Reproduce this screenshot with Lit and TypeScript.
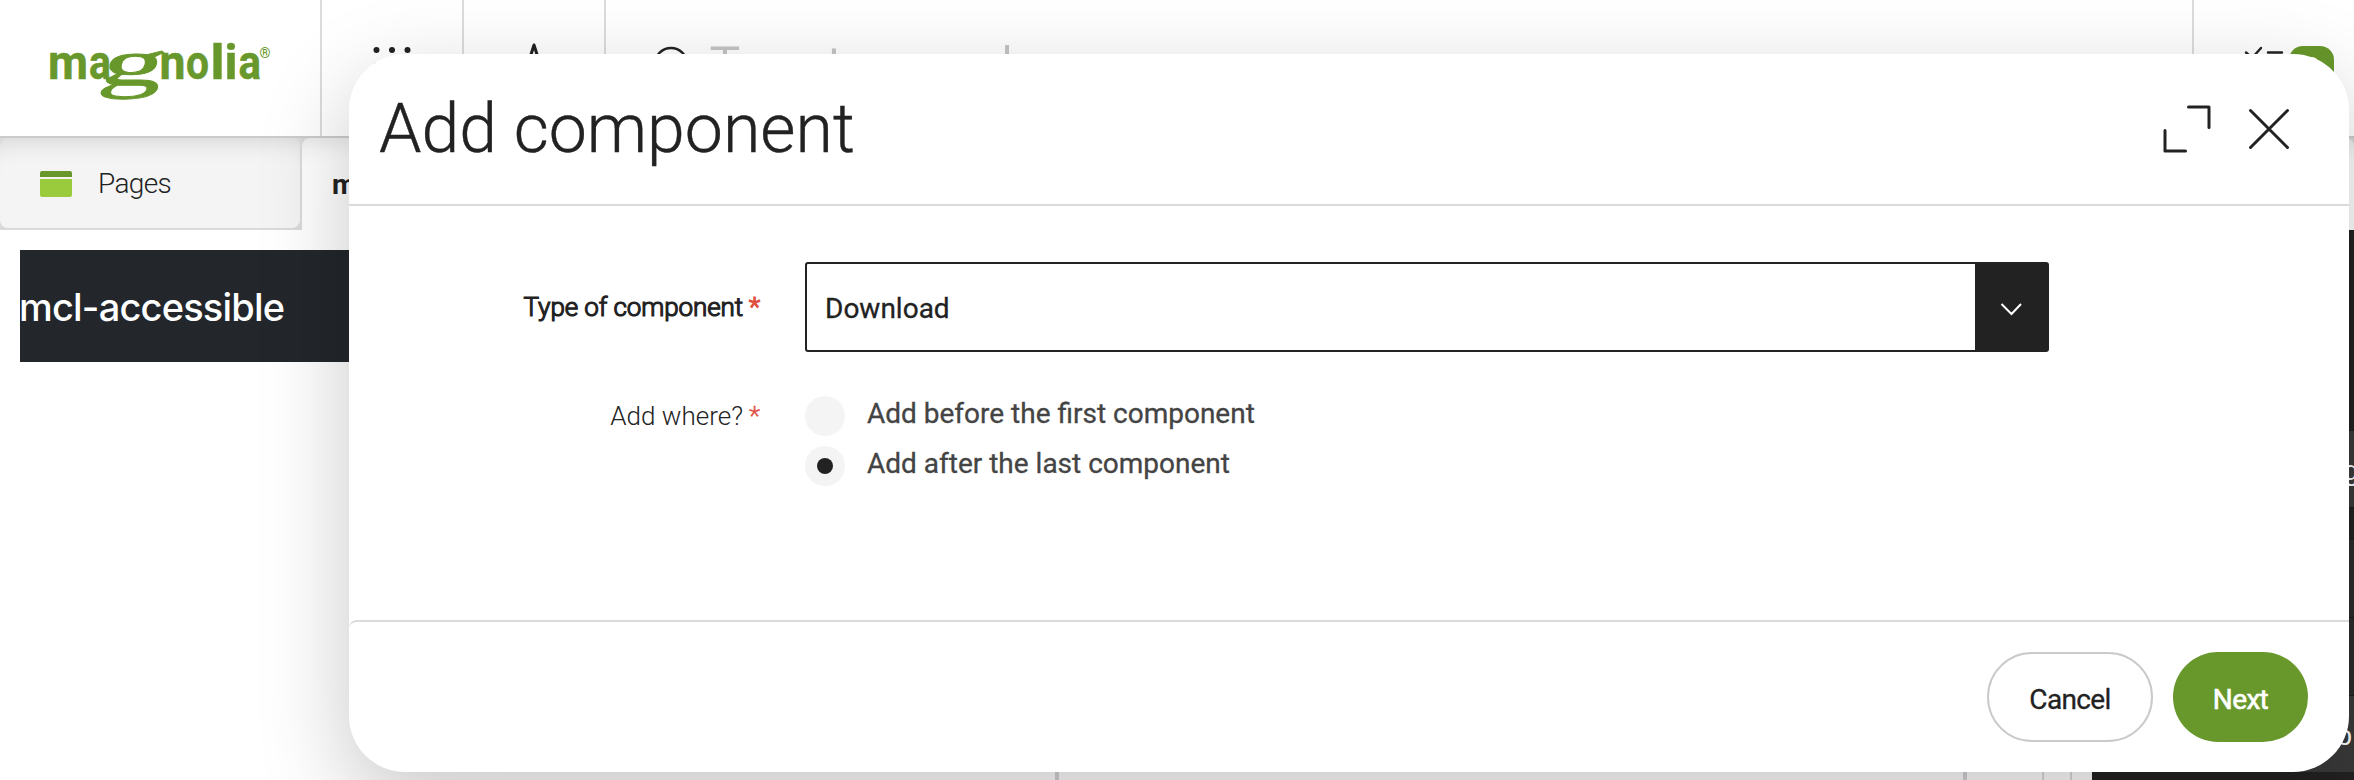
import { LitElement, html, css, svg } from "lit";
import { customElement, state } from "lit/decorators.js";

const logoLetters: Array<[string, number, number]> = [
  ["m", 48, 40],
  ["a", 89, 22],
  ["n", 159.5, 26],
  ["o", 186, 23],
  ["l", 210.5, 14],
  ["i", 224.5, 13],
  ["a", 238.5, 22.5],
];

@customElement("brand-logo")
export class BrandLogo extends LitElement {
  static styles = css`
    :host { display: block; }
    svg { display: block; fill: #68982b; font-family: Roboto, sans-serif; }
    .word { font-size: 48.5px; font-weight: 700; stroke: #68982b; stroke-width: 0.5px; }
    .g { font-family: "Liberation Serif", serif; font-size: 68px; font-weight: 400; stroke: #68982b; stroke-width: 1px; }
    .reg { font-size: 14px; font-weight: 600; }
  `;
  render() {
    return html`<svg width="320" height="136" viewBox="0 0 320 136">
      ${logoLetters.map(
        ([ch, x, w]) =>
          svg`<text class="word" x=${x} y="79" textLength=${w} lengthAdjust="spacingAndGlyphs">${ch}</text>`
      )}
      <text class="g" transform="translate(98 84.5) skewX(-14) scale(1.83 0.97)">g</text>
      <text class="reg" x="259.5" y="57.5">®</text>
    </svg>`;
  }
}

@customElement("top-bar")
export class TopBar extends LitElement {
  static styles = css`
    :host { display: flex; height: 136px; border-bottom: 2px solid #cbcbcb; background: #fff; }
    .cell { border-left: 2px solid #dcdcdc; box-sizing: border-box; }
    .small { width: 142px; }
    .search { flex: 1; display: flex; }
    .user { width: 162px; display: flex; }
    svg { display: block; fill: none; stroke: #222; stroke-width: 2.4; stroke-linecap: round; stroke-linejoin: round; }
    .dots { fill: #222; stroke: none; }
    .hint { margin-left: 4px; padding-top: 37px; font: 300 50px/59px Roboto, sans-serif; letter-spacing: -0.15px; color: #c4c4c4; white-space: nowrap; -webkit-text-stroke: 1px #c4c4c4; }
    .badge { width: 45px; height: 45px; margin: 46px 0 0 2px; border-radius: 14px; background: #68982b; color: #fff; font: 400 30px/44px Roboto, sans-serif; text-align: center; }
  `;
  render() {
    const dots = [0, 1, 2].flatMap((r) => [0, 1, 2].map((c) => [54.5 + c * 15.5, 50 + r * 15.5]));
    return html`
      <brand-logo></brand-logo>
      <div class="cell small">
        <svg class="dots" width="140" height="136">${dots.map(([x, y]) => svg`<circle cx=${x} cy=${y} r="3"/>`)}</svg>
      </div>
      <div class="cell small">
        <svg width="140" height="136"><path stroke-width="3" d="M70 45L76 64L95 64L80 75L86 93L70 82L54 93L60 75L45 64L64 64Z"/></svg>
      </div>
      <div class="cell search">
        <svg width="100" height="136"><circle cx="65" cy="64" r="16"/><path d="M77 76L90 90"/></svg>
        <span class="hint">Type to search...</span>
      </div>
      <div class="cell user">
        <svg width="93" height="136"><path d="M52 52.5L58 58L67 48M74 52.5H88M52 67L58 72L67 62M74 67H88"/></svg>
        <span class="badge">2</span>
      </div>
    `;
  }
}

@customElement("tab-bar")
export class TabBar extends LitElement {
  static styles = css`
    :host { display: flex; height: 92px; background: #fff; font: 300 28px/89px Roboto, sans-serif; color: #222; }
    .wrap { height: 92px; background: #dadada; box-sizing: border-box; }
    .idle { width: 302px; padding: 0 2px 2px 0; }
    .open { flex: 1; background: linear-gradient(#d4d4d4 0 8px, #fff 8px); }
    .tab { height: 100%; box-sizing: border-box; border-radius: 8px; background: #f4f4f4; display: flex; align-items: center; box-shadow: inset 0 24px 26px -22px rgba(0, 0, 0, 0.14); }
    .open .tab { background: #fff; border-radius: 8px 8px 0 0; padding-left: 30px; font-weight: 700; }
    .idle .tab { padding-left: 40px; letter-spacing: -0.65px; }
    svg { display: block; margin: 2px 26px 0 0; }
  `;
  render() {
    return html`
      <div class="wrap idle"><div class="tab">
        <svg width="32" height="26"><path fill="#68982b" d="M0 6V2Q0 0 2 0H30Q32 0 32 2V6Z"/><path fill="#9acb3d" d="M0 8H32V24Q32 26 30 26H2Q0 26 0 24Z"/></svg>
        <span>Pages</span>
      </div></div>
      <div class="wrap open"><div class="tab"><span>mcl-accessible</span></div></div>
    `;
  }
}

@customElement("work-area")
export class WorkArea extends LitElement {
  static styles = css`
    :host { display: flex; height: 550px; }
    .stage { flex: none; width: 2092px; display: flex; flex-direction: column; box-sizing: border-box; padding-top: 20px; }
    .banner { margin-left: 20px; height: 112px; background: #23272c; color: #fff; font: 450 38px/114px Inter, sans-serif; letter-spacing: -0.8px; text-indent: -1px; }
    .columns { flex: 1; display: grid; grid-template-columns: 1055px 908px 79px 28px 1fr; }
    .columns div + div { border-left: 2px solid #dcdcdc; }
    .columns .wide + .wide, .columns .wide + .mid { border-left: 4px solid #d3d3d8; }
    .panel { flex: 1; min-width: 0; overflow: hidden; background: #222; color: #fff; font: 400 27px/1 "Liberation Sans", sans-serif; display: flex; flex-direction: column; }
    .row { box-sizing: border-box; padding-left: 252px; border-top: 1px solid #1d1d1d; }
    .first { height: 200px; }
    .lit { height: 77px; background: #3a3a3a; line-height: 80px; }
    .gap { height: 32px; }
    .soft { height: 78px; background: #2c2c2c; }
    .last { height: 77px; background: #3a3a3a; line-height: 80px; }
    .edge { padding-left: 245px; }
  `;
  render() {
    return html`
      <div class="stage">
        <div class="banner">mcl-accessible</div>
        <div class="columns"><div class="wide"></div><div class="wide"></div><div class="mid"></div><div></div><div></div></div>
      </div>
      <div class="panel">
        <div class="row first"></div>
        <div class="row lit">g</div>
        <div class="row gap"></div>
        <div class="row soft"></div>
        <div class="row soft"></div>
        <div class="row last edge">o</div>
      </div>
    `;
  }
}

@customElement("add-dialog")
export class AddDialog extends LitElement {
  static styles = css`
    :host { display: flex; flex-direction: column; box-sizing: border-box; width: 2000px; height: 718px; border-radius: 56px; background: #fff; overflow: hidden; color: #222; font-family: Roboto, sans-serif; box-shadow: 0 30px 90px rgba(0, 0, 0, 0.22); }
    header { height: 152px; box-sizing: border-box; border-bottom: 2px solid #dadada; display: flex; align-items: center; padding: 0 59px 0 30px; }
    h1 { margin: 0; flex: 1; font-size: 68px; font-weight: 300; line-height: 80px; -webkit-text-stroke: 0.4px #222; }
    header svg { display: block; fill: none; stroke: #222; stroke-width: 3; stroke-linecap: round; stroke-linejoin: round; }
    .close { margin-left: 37px; }
    main { flex: 1; padding-top: 56px; }
    .field { display: grid; grid-template-columns: 412px 1244px; column-gap: 44px; }
    .label { justify-self: end; font-size: 26px; font-weight: 300; white-space: nowrap; display: flex; gap: 6px; padding-right: 1px; height: 40px; line-height: 40px; }
    .label i { font-style: normal; color: #e04f3f; -webkit-text-stroke: 0.4px currentColor; }
    .first .label { height: 90px; line-height: 90px; -webkit-text-stroke: 1.2px currentColor; letter-spacing: -0.1px; }
    .first .label i { -webkit-text-stroke: 1.2px currentColor; }
    .second { margin-top: 44px; }
    .select { height: 90px; box-sizing: border-box; border: 2px solid #222; border-radius: 3px; display: flex; font-size: 28px; line-height: 89px; -webkit-text-stroke: 0.3px currentColor; }
    .value { flex: 1; padding-left: 18px; }
    .arrow { width: 72px; background: #222; }
    .arrow svg { display: block; fill: none; stroke: #fff; stroke-width: 2; }
    .option { display: flex; gap: 22px; height: 50px; color: #444; font-size: 28px; line-height: 35px; cursor: pointer; -webkit-text-stroke: 0.3px currentColor; }
    .radio { width: 40px; height: 40px; border-radius: 50%; background: #f4f4f4; display: grid; place-items: center; }
    .on::after { content: ""; width: 16px; height: 16px; border-radius: 50%; background: #222; }
    footer { height: 152px; box-sizing: border-box; border-top: 2px solid #dadada; border-radius: 8px 0 0 0; padding: 30px 41px 0 0; display: flex; justify-content: flex-end; gap: 20px; }
    button { height: 90px; box-sizing: border-box; border-radius: 45px; font: 400 28px/32px Roboto, sans-serif; letter-spacing: -0.65px; padding: 6px 0 0; -webkit-text-stroke: 0.3px currentColor; }
    .cancel { width: 166px; border: 2px solid #cacaca; background: #fff; color: #222; }
    .next { width: 135px; border: 0; background: #68982b; color: #fff; -webkit-text-stroke: 0.6px #fff; }
  `;
  @state() private where = 1;
  private options = ["Add before the first component", "Add after the last component"];
  render() {
    return html`
      <header>
        <h1>Add component</h1>
        <svg width="48" height="48"><path d="M25.5 2H46V22.5M2 25.5V46H22.5"/></svg>
        <svg class="close" width="42" height="42"><path d="M2.5 2.5L39.5 39.5M39.5 2.5L2.5 39.5"/></svg>
      </header>
      <main>
        <div class="field first">
          <div class="label"><span>Type of component</span><i>*</i></div>
          <div class="select">
            <span class="value">Download</span>
            <span class="arrow"><svg width="72" height="86"><path d="M26.5 40L36.5 50L46 40"/></svg></span>
          </div>
        </div>
        <div class="field second">
          <div class="label"><span>Add where?</span><i>*</i></div>
          <div>
            ${this.options.map(
              (text, i) => html`<div class="option" @click=${() => (this.where = i)}>
                <span class="radio ${this.where === i ? "on" : ""}"></span><span>${text}</span>
              </div>`
            )}
          </div>
        </div>
      </main>
      <footer>
        <button class="cancel">Cancel</button>
        <button class="next">Next</button>
      </footer>
    `;
  }
}

@customElement("app-root")
export class AppRoot extends LitElement {
  static styles = css`
    :host { display: block; position: relative; width: 2354px; height: 780px; overflow: hidden; background: #fff; }
    .dialog { position: absolute; left: 349px; top: 54px; }
  `;
  render() {
    return html`
      <top-bar></top-bar>
      <tab-bar></tab-bar>
      <work-area></work-area>
      <add-dialog class="dialog"></add-dialog>
    `;
  }
}
